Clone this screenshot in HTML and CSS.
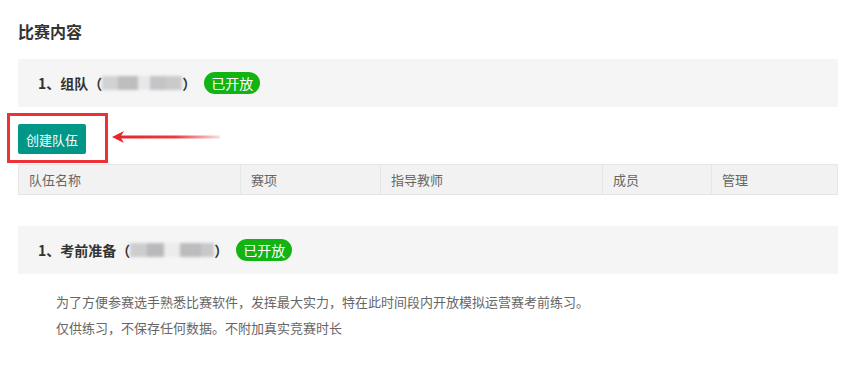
FILE: index.html
```html
<!DOCTYPE html>
<html lang="zh-CN">
<head>
<meta charset="UTF-8" />
<meta name="viewport" content="width=device-width, initial-scale=1.0" />
<title>比赛内容</title>
<link rel="stylesheet" href="styles.css">
</head>
<body>
<div class="page">
    <h3 class="page-title">比赛内容</h3>

    <div class="stage">
        <span class="stage-name">1、组队（<span class="masked masked-a"></span>）</span>
        <span class="badge">已开放</span>
    </div>

    <div class="toolbar">
        <button type="button" class="btn">创建队伍</button>
        <span class="mark-box"></span>
        <svg class="mark-arrow" width="110" height="14" viewBox="0 0 110 14">
            <defs>
                <linearGradient id="fade" x1="0" x2="1" y1="0" y2="0">
                    <stop offset="0" stop-color="#e8262b" stop-opacity="1" />
                    <stop offset="0.55" stop-color="#e8262b" stop-opacity="0.9" />
                    <stop offset="1" stop-color="#e8262b" stop-opacity="0.15" />
                </linearGradient>
            </defs>
            <polygon points="0,7 12,1 9,6 9,8 12,13" fill="#e8262b" />
            <rect x="9" y="5.5" width="99" height="3" fill="url(#fade)" />
        </svg>
    </div>

    <table class="team-table">
        <thead>
        <tr>
            <th class="col-name">队伍名称</th>
            <th class="col-event">赛项</th>
            <th class="col-teacher">指导教师</th>
            <th class="col-member">成员</th>
            <th>管理</th>
        </tr>
        </thead>
        <tbody>
        <!-- 暂无队伍 -->
        </tbody>
    </table>

    <div class="stage stage-second">
        <span class="stage-name">1、考前准备（<span class="masked masked-b"></span>）</span>
        <span class="badge">已开放</span>
    </div>

    <div class="notes">
        <p>为了方便参赛选手熟悉比赛软件，发挥最大实力，特在此时间段内开放模拟运营赛考前练习。</p>
        <p>仅供练习，不保存任何数据。不附加真实竞赛时长</p>
    </div>
</div>
</body>
</html>
```

FILE: styles.css
```css
body {
    margin: 0;
    background-color: #fff;
    font-family: "Microsoft YaHei", "Noto Sans CJK SC", "Liberation Sans", sans-serif;
    color: #333;
}

.page {
    width: 820px;
    padding: 18px 23px 20px 18px;
}

.page-title {
    margin: 0 0 15px;
    font-size: 16px;
    line-height: 26px;
    font-weight: bold;
    color: #333;
}

.stage {
    display: flex;
    align-items: center;
    height: 48px;
    padding: 0 20px;
    background-color: #f5f5f5;
}

.stage-name {
    display: flex;
    align-items: center;
    font-size: 14px;
    font-weight: bold;
    color: #333;
}

.masked {
    display: inline-block;
    height: 14px;
    filter: blur(1.5px);
}

.masked-a {
    width: 80px;
    background: linear-gradient(90deg, #d2d2d4 0 20%, #bdbdbd 20% 45%, #e6e8eb 45% 60%, #c4c4c6 60% 80%, #cacaca 80% 100%);
}

.masked-b {
    width: 84px;
    background: linear-gradient(90deg, #cdcdd0 0 20%, #b9b9bb 20% 40%, #ececed 40% 60%, #bcbcbe 60% 85%, #c8c8ca 85% 100%);
}

.badge {
    margin-left: 8px;
    height: 22px;
    line-height: 22px;
    padding: 0 7px;
    border-radius: 11px;
    background-color: #12b312;
    color: #fff;
    font-size: 14px;
}

.toolbar {
    position: relative;
    margin-top: 17px;
    margin-bottom: 10px;
    height: 30px;
}

.btn {
    height: 30px;
    width: 68px;
    padding: 0;
    border: none;
    border-radius: 2px;
    background-color: #009688;
    color: #fff;
    font-family: inherit;
    font-size: 13px;
    cursor: pointer;
}

.mark-box {
    position: absolute;
    left: -11px;
    top: -11px;
    width: 95px;
    height: 44px;
    border: 3px solid #ed3237;
}

.mark-arrow {
    position: absolute;
    left: 94px;
    top: 6px;
}

.team-table {
    width: 820px;
    border-collapse: collapse;
    margin-bottom: 31px;
}

.team-table th {
    height: 29px;
    padding: 0 10px;
    border: 1px solid #e6e6e6;
    background-color: #f2f2f2;
    color: #666;
    font-size: 13px;
    font-weight: normal;
    text-align: left;
}

.col-name { width: 201px; }
.col-event { width: 119px; }
.col-teacher { width: 201px; }
.col-member { width: 88px; }

.notes {
    padding: 15px 0 0 38px;
    font-size: 13px;
    line-height: 26px;
    color: #666;
}

.notes p {
    margin: 0;
}
```
